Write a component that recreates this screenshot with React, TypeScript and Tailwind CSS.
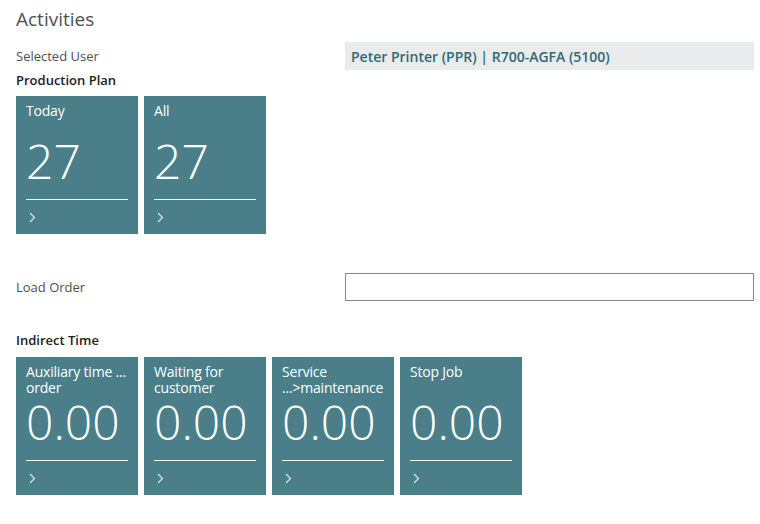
import { ReactNode } from "react";

type Tile = {
  title: ReactNode;
  value: string;
};

const planTiles: Tile[] = [
  { title: "Today", value: "27" },
  { title: "All", value: "27" },
];

const indirectTiles: Tile[] = [
  { title: <>Auxiliary time ...<br />order</>, value: "0.00" },
  { title: <>Waiting for<br />customer</>, value: "0.00" },
  { title: <>Service<br />...&gt;maintenance</>, value: "0.00" },
  { title: "Stop Job", value: "0.00" },
];

function Chevron() {
  return (
    <svg width="8" height="11" viewBox="0 0 8 11" fill="none" stroke="currentColor" strokeWidth={1.2}>
      <path d="M2 1l4.5 4.5L2 10" />
    </svg>
  );
}

function CueTile({ t }: { t: Tile }) {
  return (
    <div className="flex h-[138px] w-[122px] flex-col overflow-hidden bg-[#4a7e89] px-[10px] text-white">
      <div className="h-[39px] whitespace-nowrap pt-[7px] text-[14px] leading-[16px] tracking-[-0.2px]">
        {t.title}
      </div>
      <div className="flex h-[64px] items-start pt-[2px] text-[48px] font-light leading-[48px]">
        {t.value}
      </div>
      <div className="h-px bg-white" />
      <div className="flex h-[34px] items-center pl-[2px] text-white/80">
        <Chevron />
      </div>
    </div>
  );
}

export default function App() {
  return (
    <div
      className="h-[524px] w-[760px] overflow-hidden bg-white pl-4 pr-[6px]"
      style={{ fontFamily: '"Open Sans", "Noto Sans", sans-serif' }}
    >
      {/* Header */}
      <h1 className="pt-[7px] text-[19px] leading-[24px] text-[#505050]">Activities</h1>

      {/* Selected user */}
      <div className="mt-[11px] grid grid-cols-[329px_1fr] items-center">
        <span className="pt-[2px] text-[13px] text-[#505050]">Selected User</span>
        <div className="flex h-[28px] items-center bg-[#eaebec] px-[6px] text-[14px] font-semibold text-[#2f6a75]">
          Peter Printer (PPR) | R700-AGFA (5100)
        </div>
      </div>

      {/* Production plan */}
      <div className="h-[20px] text-[13px] font-semibold leading-[20px] text-[#212121]">Production Plan</div>
      <div className="mt-[6px] flex gap-[6px]">
        {planTiles.map((t, i) => (
          <CueTile key={i} t={t} />
        ))}
      </div>

      {/* Load order */}
      <div className="mt-[39px] grid grid-cols-[329px_1fr] items-center">
        <span className="pt-[2px] text-[13px] text-[#505050]">Load Order</span>
        <input className="h-[28px] border border-[#8a8886] bg-white px-2 text-[13px] outline-none" />
      </div>

      {/* Indirect time */}
      <div className="mt-[29px] h-[20px] text-[13px] font-semibold leading-[20px] text-[#212121]">Indirect Time</div>
      <div className="mt-[7px] flex gap-[6px]">
        {indirectTiles.map((t, i) => (
          <CueTile key={i} t={t} />
        ))}
      </div>
    </div>
  );
}
